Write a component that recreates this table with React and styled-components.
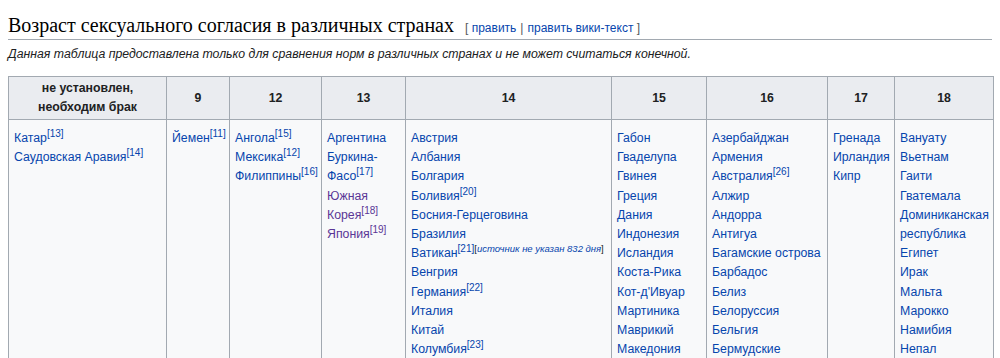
import React from "react";
import styled, { createGlobalStyle } from "styled-components";

const GlobalStyle = createGlobalStyle`
  body {
    margin: 0;
    padding: 0 8px;
    background: #ffffff;
    color: #202122;
    font-family: "Liberation Sans", Arial, sans-serif;
  }
`;

const Heading = styled.h2`
  margin: 0;
  padding: 13px 0 2px;
  font-family: "Liberation Serif", "Times New Roman", serif;
  font-weight: normal;
  font-size: 20px;
  line-height: 1.2;
  color: #000;
  border-bottom: 1px solid #a2a9b1;
  display: flex;
  align-items: baseline;
`;

const EditLinks = styled.span`
  margin-left: 11px;
  font-family: "Liberation Sans", Arial, sans-serif;
  font-size: 12px;
  color: #54595d;
  a {
    color: #0645ad;
    text-decoration: none;
  }
`;

const Divider = styled.span`
  margin: 0 4px;
`;

const Note = styled.p`
  margin: 5px 0 0;
  font-size: 12.3px;
  font-style: italic;
  line-height: 19px;
  color: #202122;
`;

const Table = styled.table`
  margin-top: 12px;
  width: 985px;
  table-layout: fixed;
  border-collapse: collapse;
  background: #f8f9fa;
  border: 1px solid #a2a9b1;
  font-size: 12.3px;
  color: #202122;
`;

const HeadCell = styled.th`
  background: #eaecf0;
  border: 1px solid #a2a9b1;
  padding: 2px 6px;
  height: 38px;
  font-weight: bold;
  text-align: center;
  line-height: 19px;
`;

const Cell = styled.td`
  border: 1px solid #a2a9b1;
  padding: 9px 5px 5px;
  vertical-align: top;
  line-height: 19.2px;
`;

const Country = styled.a`
  display: block;
  color: ${(p) => (p.$visited ? "#5a3696" : "#0645ad")};
  text-decoration: none;
`;

const Ref = styled.sup`
  font-size: 10px;
  line-height: 1;
  vertical-align: 5px;
`;

const Missing = styled.sup`
  font-size: 9.5px;
  line-height: 1;
  vertical-align: 5px;
  color: #202122;
  i {
    color: #0645ad;
  }
`;

const columns = [
  { title: ["не установлен,", "необходим брак"], width: 158, items: [["Катар", 13], ["Саудовская Аравия", 14]] },
  { title: ["9"], width: 63, items: [["Йемен", 11]] },
  { title: ["12"], width: 92, items: [["Ангола", 15], ["Мексика", 12], ["Филиппины", 16]] },
  {
    title: ["13"],
    width: 84,
    items: [["Аргентина"], ["Буркина-Фасо", 17], ["Южная Корея", 18, true], ["Япония", 19, true]],
  },
  {
    title: ["14"],
    width: 206,
    items: [
      ["Австрия"], ["Албания"], ["Болгария"], ["Боливия", 20], ["Босния-Герцеговина"], ["Бразилия"],
      ["Ватикан", 21, false, true], ["Венгрия"], ["Германия", 22], ["Италия"], ["Китай"], ["Колумбия", 23],
      ["Лихтенштейн"], ["Люксембург"],
    ],
  },
  {
    title: ["15"],
    width: 95,
    items: [
      ["Габон"], ["Гваделупа"], ["Гвинея"], ["Греция"], ["Дания"], ["Индонезия"], ["Исландия"],
      ["Коста-Рика"], ["Кот-д'Ивуар"], ["Мартиника"], ["Маврикий"], ["Македония"], ["Монако"],
    ],
  },
  {
    title: ["16"],
    width: 121,
    items: [
      ["Азербайджан"], ["Армения"], ["Австралия", 26], ["Алжир"], ["Андорра"], ["Антигуа"],
      ["Багамские острова"], ["Барбадос"], ["Белиз"], ["Белоруссия"], ["Бельгия"], ["Бермудские острова"],
    ],
  },
  { title: ["17"], width: 67, items: [["Гренада"], ["Ирландия"], ["Кипр"]] },
  {
    title: ["18"],
    width: 99,
    items: [
      ["Вануату"], ["Вьетнам"], ["Гаити"], ["Гватемала"], ["Доминиканская республика"], ["Египет"],
      ["Ирак"], ["Мальта"], ["Марокко"], ["Намибия"], ["Непал"], ["Никарагуа"],
    ],
  },
];

export default function App() {
  return (
    <>
      <GlobalStyle />
      <Heading>
        Возраст сексуального согласия в различных странах
        <EditLinks>
          [ <a href="#">править</a>
          <Divider>|</Divider>
          <a href="#">править вики-текст</a> ]
        </EditLinks>
      </Heading>
      <Note>
        Данная таблица предоставлена только для сравнения норм в различных странах и не может считаться конечной.
      </Note>
      <Table>
        <colgroup>
          {columns.map((c, i) => (
            <col key={i} style={{ width: c.width }} />
          ))}
        </colgroup>
        <thead>
          <tr>
            {columns.map((c, i) => (
              <HeadCell key={i}>
                {c.title.map((t, j) => (
                  <div key={j}>{t}</div>
                ))}
              </HeadCell>
            ))}
          </tr>
        </thead>
        <tbody>
          <tr>
            {columns.map((c, i) => (
              <Cell key={i}>
                {c.items.map(([name, ref, visited, missing], j) => (
                  <Country key={j} href="#" $visited={visited}>
                    {name}
                    {ref && <Ref>[{ref}]</Ref>}
                    {missing && (
                      <Missing>
                        [<i>источник не указан 832 дня</i>]
                      </Missing>
                    )}
                  </Country>
                ))}
              </Cell>
            ))}
          </tr>
        </tbody>
      </Table>
    </>
  );
}
